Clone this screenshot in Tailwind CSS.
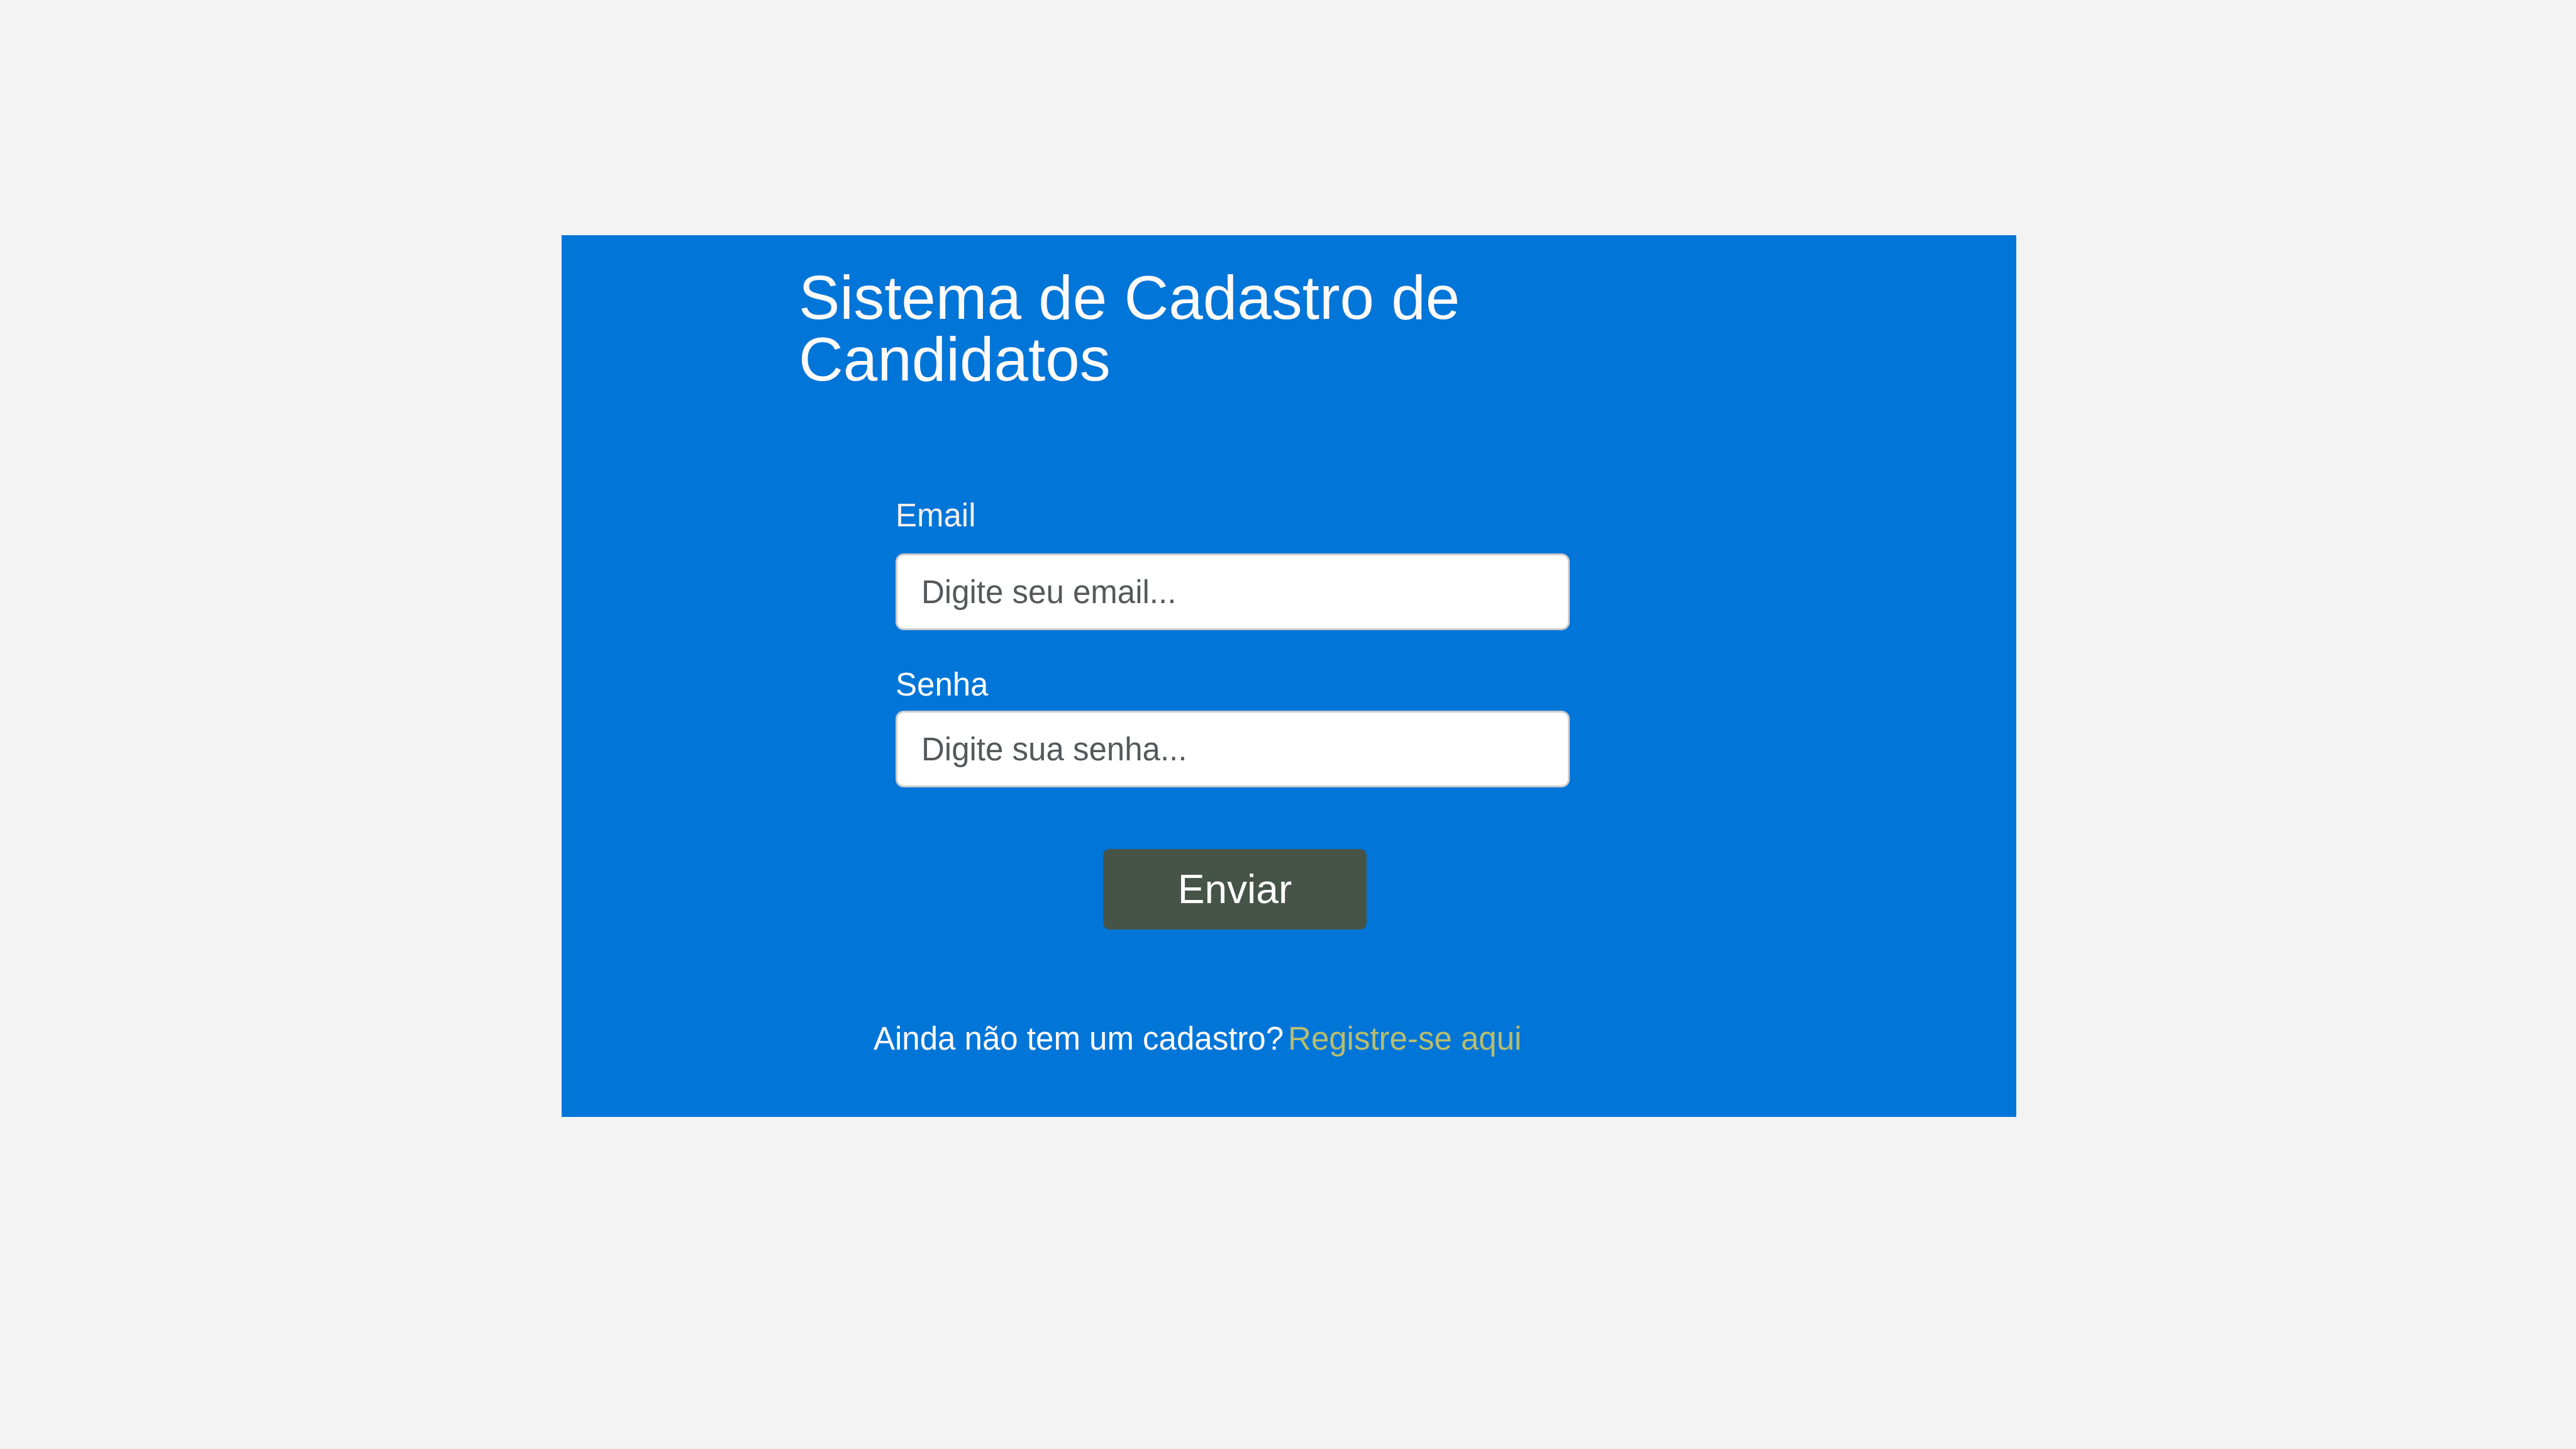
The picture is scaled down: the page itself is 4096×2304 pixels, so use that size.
<!DOCTYPE html>
<html lang="pt-BR">
<head>
<meta charset="utf-8">
<meta name="viewport" content="width=device-width, initial-scale=1">
<title>Sistema de Cadastro de Candidatos</title>
<script src="https://cdn.jsdelivr.net/npm/@tailwindcss/browser@4"></script>
</head>
<body class="min-h-screen bg-[#f3f3f3] pt-[374px] pr-[890px] pl-[893px] font-['Liberation_Sans',Arial,sans-serif] text-[51px] leading-[77px]">
<main class="bg-[#0275d8] pt-[50px] pb-[86px]">
  <h1 class="ml-[377px] max-w-[1160px] text-[98px] leading-[98px] text-[#fffafa]">Sistema de Cadastro de Candidatos</h1>
  <form class="mt-[161px] ml-[531px] flex max-w-[1072px] flex-col">
    <label for="email" class="self-start text-[#f2eeee]">Email</label>
    <input id="email" type="email" placeholder="Digite seu email..." class="mt-[22px] h-[122px] w-full rounded-[13px] border-3 border-[#cccccc] bg-white px-[38px] text-[#55595c] placeholder:text-[#55595c]">
    <label for="senha" class="mt-[48px] self-start text-white">Senha</label>
    <input id="senha" type="password" placeholder="Digite sua senha..." class="mt-[3px] h-[122px] w-full rounded-[13px] border-3 border-[#cccccc] bg-white px-[38px] text-[#55595c] placeholder:text-[#55595c]">
    <button type="submit" class="mt-[98px] ml-[330px] h-[128px] w-[419px] rounded-[10px] bg-[#465448] text-[64px] leading-[85px] text-white">Enviar</button>
  </form>
  <p class="mt-[135px] ml-[496px] flex gap-[7px] text-[#fffafa]">Ainda não tem um cadastro?<a href="#" class="text-[#b7bd6f]">Registre-se aqui</a></p>
</main>
</body>
</html>
